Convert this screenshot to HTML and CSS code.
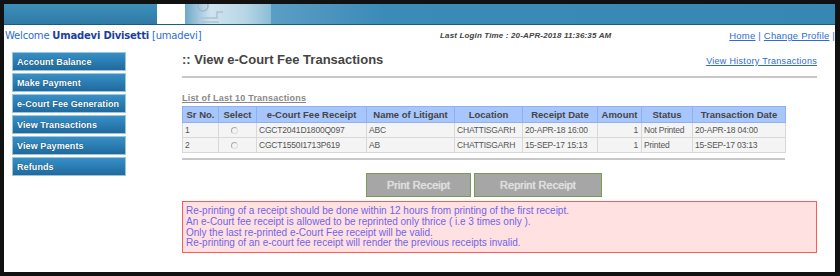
FILE: index.html
```html
<!DOCTYPE html>
<html lang="en">
<head>
    <meta charset="UTF-8">
    <title>View e-Court Fee Transactions</title>
    <link rel="stylesheet" href="styles.css">
</head>
<body>
    <div class="frame">
        <div class="banner">
            <div class="banner-left"></div>
            <div class="banner-notch"></div>
            <div class="banner-logo">
                <svg width="40" height="20" viewBox="0 0 40 20">
                    <circle cx="12" cy="2" r="5" fill="none" stroke="#9fb8c8" stroke-width="1.5"/>
                    <path d="M6 14 h20 v-6 h6" fill="none" stroke="#a9c3d2" stroke-width="1.5"/>
                    <path d="M10 18 h18" fill="none" stroke="#a9c3d2" stroke-width="1.5"/>
                </svg>
            </div>
            <div class="banner-right"></div>
        </div>

        <div class="topline">
            <div class="welcome">Welcome <b>Umadevi Divisetti</b> [umadevi]</div>
            <div class="last-login">Last Login Time : 20-APR-2018 11:36:35 AM</div>
            <div class="top-links"><a href="#">Home</a> | <a href="#">Change Profile</a> |</div>
        </div>

        <div class="page">
            <ul class="menu">
                <li>Account Balance</li>
                <li>Make Payment</li>
                <li>e-Court Fee Generation</li>
                <li>View Transactions</li>
                <li>View Payments</li>
                <li>Refunds</li>
            </ul>

            <div class="content">
                <div class="title-row">
                    <h1>:: View e-Court Fee Transactions</h1>
                    <a href="#" class="history">View History Transactions</a>
                </div>
                <hr class="rule">

                <div class="list-title">List of Last 10 Transactions</div>
                <table class="tx">
                    <thead>
                        <tr>
                            <th class="c-sr">Sr No.</th>
                            <th class="c-sel">Select</th>
                            <th class="c-rcpt">e-Court Fee Receipt</th>
                            <th class="c-name">Name of Litigant</th>
                            <th class="c-loc">Location</th>
                            <th class="c-rdate">Receipt Date</th>
                            <th class="c-amt">Amount</th>
                            <th class="c-stat">Status</th>
                            <th class="c-tdate">Transaction Date</th>
                        </tr>
                    </thead>
                    <tbody>
                        <tr>
                            <td>1</td>
                            <td class="sel"><span class="radio"></span></td>
                            <td>CGCT2041D1800Q097</td>
                            <td>ABC</td>
                            <td>CHATTISGARH</td>
                            <td>20-APR-18 16:00</td>
                            <td class="num">1</td>
                            <td>Not Printed</td>
                            <td>20-APR-18 04:00</td>
                        </tr>
                        <tr>
                            <td>2</td>
                            <td class="sel"><span class="radio"></span></td>
                            <td>CGCT1550I1713P619</td>
                            <td>AB</td>
                            <td>CHATTISGARH</td>
                            <td>15-SEP-17 15:13</td>
                            <td class="num">1</td>
                            <td>Printed</td>
                            <td>15-SEP-17 03:13</td>
                        </tr>
                    </tbody>
                </table>
                <hr class="rule short">

                <div class="actions">
                    <button class="btn" disabled>Print Receipt</button>
                    <button class="btn wide" disabled>Reprint Receipt</button>
                </div>

                <div class="notice">
                    Re-printing of a receipt should be done within 12 hours from printing of the first receipt.<br>
                    An e-Court fee receipt is allowed to be reprinted only thrice ( i.e 3 times only ).<br>
                    Only the last re-printed e-Court Fee receipt will be valid.<br>
                    Re-printing of an e-court fee receipt will render the previous receipts invalid.
                </div>
            </div>
        </div>
    </div>
</body>
</html>
```

FILE: styles.css
```css
body {
    margin: 0;
    font-family: "Liberation Sans", Arial, sans-serif;
    background: #fff;
}
.frame {
    width: 840px;
    height: 276px;
    box-sizing: border-box;
    border-top: 4px solid #111;
    border-left: 4px solid #111;
    border-right: 5px solid #111;
    border-bottom: 4px solid #111;
    overflow: hidden;
}
.banner {
    display: flex;
    height: 20px;
    border-bottom: 1px solid #1d5a7c;
}
.banner-left {
    width: 153px;
    background: linear-gradient(#3d8fbb, #2f7aa6);
}
.banner-notch {
    width: 28px;
    background: #fff;
}
.banner-logo {
    width: 86px;
    background: linear-gradient(90deg, #6da8c8, #d0e4ee 30%, #b8d6e6 70%, #8cbdd6);
    overflow: hidden;
}
.banner-logo svg {
    display: block;
    margin-left: 6px;
}
.banner-right {
    flex: 1;
    background: linear-gradient(90deg, #5b9ec4, #3b8bb8 20%, #3787b4);
}
.topline {
    display: flex;
    align-items: center;
    height: 21px;
    padding: 0 0 0 1px;
}
.welcome {
    font-family: "DejaVu Sans", Verdana, sans-serif;
    font-size: 10px;
    color: #2e6bd6;
    width: 435px;
    letter-spacing: -0.2px;
}
.welcome b {
    color: #1b3f9e;
}
.last-login {
    font-size: 8px;
    font-style: italic;
    font-weight: bold;
    color: #444;
    letter-spacing: 0.15px;
    flex: 1;
}
.top-links {
    font-size: 9.5px;
    color: #2e6bd6;
    letter-spacing: 0.2px;
}
.top-links a {
    color: #2e6bd6;
}
.page {
    display: flex;
    padding-top: 6px;
}
.menu {
    list-style: none;
    margin: 0 0 0 8px;
    padding: 0;
    width: 114px;
}
.menu li {
    height: 19px;
    margin-bottom: 2px;
    padding-left: 4px;
    line-height: 19px;
    font-family: "Liberation Sans", Arial, sans-serif;
    font-size: 9px;
    font-weight: bold;
    color: #fff;
    white-space: nowrap;
    letter-spacing: 0.1px;
    background: linear-gradient(#3790c6, #1f6a9e);
    border: 1px solid #9ec4dc;
    box-sizing: border-box;
    text-shadow: 0 0 1px #0b3a5a;
    overflow: hidden;
}
.content {
    width: 635px;
    margin-left: 56px;
}
.title-row {
    display: flex;
    justify-content: space-between;
    align-items: flex-end;
    height: 15px;
}
h1 {
    margin: 0;
    font-size: 13px;
    font-weight: bold;
    color: #444;
}
.history {
    font-size: 9px;
    color: #2e6bd6;
    letter-spacing: 0.3px;
    margin-bottom: 1px;
}
.rule {
    border: 0;
    border-top: 2px solid #c8c8c8;
    margin: 9px 0 0;
}
.rule.short {
    width: 603px;
    margin: 5px 0 0;
}
.list-title {
    margin-top: 15px;
    font-size: 9px;
    font-weight: bold;
    color: #888;
    text-decoration: underline;
    letter-spacing: 0.2px;
    line-height: 11px;
}
.tx {
    margin-top: 2px;
    border-collapse: collapse;
    width: 603px;
    table-layout: fixed;
}
.tx th {
    background: #a7c6fb;
    border: 1px solid #8fb0f5;
    font-size: 9.5px;
    font-weight: bold;
    color: #454545;
    height: 15px;
    padding: 0;
    text-align: center;
    white-space: nowrap;
}
.tx td {
    border: 1px solid #d8d8d8;
    background: #f4f4f4;
    font-size: 8.5px;
    color: #555;
    height: 14px;
    padding: 0 0 0 2px;
    white-space: nowrap;
    letter-spacing: -0.2px;
}
.tx td.num {
    text-align: right;
    padding-right: 3px;
}
.tx td.sel {
    padding-left: 12px;
}
.radio {
    display: inline-block;
    width: 5px;
    height: 5px;
    border-radius: 50%;
    border: 1px solid #aaa;
    border-right-color: #ddd;
    border-bottom-color: #ddd;
    vertical-align: middle;
}
.c-sr { width: 35px; }
.c-sel { width: 37px; }
.c-rcpt { width: 109px; }
.c-name { width: 87px; }
.c-loc { width: 67px; }
.c-rdate { width: 74px; }
.c-amt { width: 43px; }
.c-stat { width: 50px; }
.c-tdate { width: 92px; }
.actions {
    display: flex;
    gap: 3px;
    margin: 13px 0 0 184px;
}
.btn {
    height: 24px;
    width: 105px;
    background: #a6a6a6;
    border: 1px solid #7c9a52;
    font-family: "Liberation Sans", Arial, sans-serif;
    font-size: 11px;
    color: #dcdcdc;
    text-shadow: 0 0 1px #fff;
    padding: 0;
}
.btn.wide {
    width: 128px;
}
.notice {
    margin-top: 4px;
    background: #ffe1e1;
    border: 1px solid #ff5a5a;
    padding: 4px 0 3px 3px;
    font-size: 10px;
    line-height: 10.8px;
    color: #7064ee;
}
```
